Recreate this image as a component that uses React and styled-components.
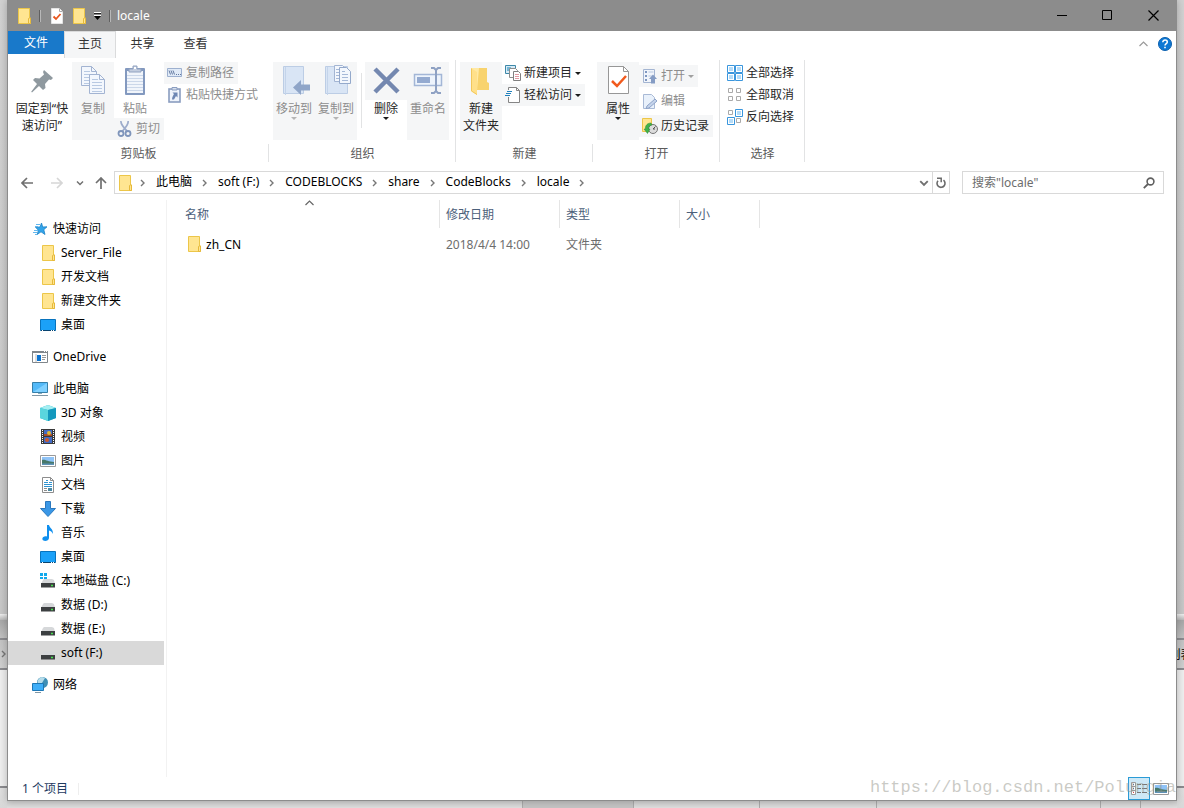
import styled, { createGlobalStyle } from "styled-components";

function Svg({ w = 16, h = 16, box, children }) {
  return (
    <svg width={w} height={h} viewBox={box || `0 0 ${w} ${h}`} fill="none" aria-hidden="true">
      {children}
    </svg>
  );
}

/* ---------- small icons ---------- */

const FolderIcon = ({ w = 13, h = 16 }) => (
  <Svg w={w} h={h} box="0 0 13 16">
    <path d="M.5.5h11v9.500h1v5.500H.5z" fill="#ffe591" stroke="#ecc649" />
    <path d="M10.500 15.500v-5l1-.5h1v5.500z" fill="#ffe591" stroke="#e6b93a" />
  </Svg>
);

const SheetCheckIcon = () => (
  <Svg w={14} h={16}>
    <path d="M.5.5h8l3 3v12H.5z" fill="#fff" stroke="#e4e4e4" />
    <path d="M8.500.5v3h3" stroke="#aaa" />
    <path d="M2.500 8.500 5 11l4.500-5" stroke="#e8561e" strokeWidth="1.800" />
  </Svg>
);

const QuickMenuIcon = () => (
  <Svg w={7} h={8}>
    <path d="M0 .5h7" stroke="#fff" />
    <path d="M0 1.500h7" stroke="#222" />
    <path d="M0 4h7L3.500 8z" fill="#000" />
    <path d="M0 3.500h7" stroke="#fff" />
  </Svg>
);

const Caret = ({ color = "#1a1a1a" }) => (
  <Svg w={6} h={3}>
    <path d="M0 0h6L3 3z" fill={color} />
  </Svg>
);

const Crumb = () => (
  <Svg w={6} h={8}>
    <path d="m1 1 3 3-3 3" stroke="#777" strokeWidth="1.400" />
  </Svg>
);

const ArrowLeft = ({ color = "#707070" }) => (
  <Svg w={12} h={12}>
    <path d="M12 6H1M6 1 1 6l5 5" stroke={color} strokeWidth="1.700" />
  </Svg>
);

const ArrowRight = () => (
  <Svg w={12} h={12}>
    <path d="M0 6h11M6 1l5 5-5 5" stroke="#d6d6d6" strokeWidth="1.700" />
  </Svg>
);

const ArrowUp = () => (
  <Svg w={12} h={12}>
    <path d="M6 12V1M1 6l5-5 5 5" stroke="#707070" strokeWidth="1.700" />
  </Svg>
);

const ChevronDown = ({ w = 8 }) => (
  <Svg w={w} h={w} box="0 0 8 8">
    <path d="m1 2.500 3 3 3-3" stroke="#707070" strokeWidth="1.500" />
  </Svg>
);

const ChevronUp = ({ color = "#9a9a9a" }) => (
  <Svg w={9} h={6}>
    <path d="m.5 5 4-4 4 4" stroke={color} strokeWidth="1.200" />
  </Svg>
);

const RefreshIcon = () => (
  <Svg w={10} h={12}>
    <path d="M7.500 3.200A4 4 0 1 1 2 3.700" stroke="#6a6a6a" strokeWidth="1.600" />
    <path d="M1 1.200h4.200v4" stroke="#6a6a6a" strokeWidth="1.500" />
  </Svg>
);

const SearchIcon = () => (
  <Svg w={12} h={12}>
    <circle cx="7.500" cy="4.500" r="3.400" stroke="#606060" strokeWidth="1.600" />
    <path d="M5 7 .8 11.200" stroke="#606060" strokeWidth="1.800" />
  </Svg>
);

const HelpIcon = () => (
  <Svg w={14} h={14}>
    <circle cx="7" cy="7" r="6.500" fill="#0f78d4" stroke="#0a5fae" />
    <path d="M4.800 5.200c0-3 4.500-2.700 4.500-.2C9.300 6.700 7 6.600 7 8.600" stroke="#fff" strokeWidth="1.500" />
    <path d="M6.200 9.700h1.600v1.600H6.200z" fill="#fff" />
  </Svg>
);

/* ---------- ribbon icons ---------- */

const PinIcon = () => (
  <Svg w={32} h={32}>
    <path d="m18 5 9 8-2 2-2-.5-4 4.500.5 4-2.500 2-4-4-7 6.500-.8-.8L11 19l-4-4 2-2 4.500.5 4.500-4-1-2.500z" fill="#8f999f" />
  </Svg>
);

const Page = ({ x, y, fill = "#f3f7fd", stroke = "#a3b4d2" }) => (
  <g>
    <path d={`M${x}.5 ${y}.5h10l5 5v14h-15z`} fill={fill} stroke={stroke} />
    <path d={`M${x + 10}.5 ${y}.5v5h5`} stroke={stroke} />
    <path
      d={`M${x + 3} ${y + 5}.5h6M${x + 3} ${y + 8}.5h10M${x + 3} ${y + 11}.5h10M${x + 3} ${y + 14}.5h10M${x + 3} ${y + 17}.5h10`}
      stroke="#b8c9e2"
    />
  </g>
);

const CopyIcon = () => (
  <Svg w={32} h={32}>
    <Page x={4} y={1} />
    <Page x={12} y={9} />
  </Svg>
);

const PasteIcon = () => (
  <Svg w={32} h={32}>
    <rect x="6" y="3" width="20" height="27" rx="1" fill="#8399bf" />
    <path d="M8 6h16v22H8z" fill="#f1f5fb" />
    <path d="M8 10.500h16M8 13.500h16M8 16.500h16M8 19.500h16M8 22.500h16M8 25.500h16" stroke="#cbd7e9" />
    <path d="M10 7V4h4V1h4v3h4v3z" fill="#c3cddf" stroke="#91a2c0" />
    <path d="M15 2h2v2h-2z" fill="#fff" />
  </Svg>
);

const CopyPathIcon = () => (
  <Svg>
    <path d="M.5 3.500h14v8H.5z" fill="#e0eaf7" stroke="#9db0cf" />
    <path d="m2 5.500 1.500 4M4 5.500l1.500 4M6 5.500l1.500 4" stroke="#6379a0" />
    <path d="M9 9.500h1M11 9.500h1M13 9.500h1" stroke="#6379a0" />
  </Svg>
);

const PasteLinkIcon = () => (
  <Svg>
    <rect x="2" y="2" width="11" height="13" fill="#eef3fb" stroke="#8a9dc0" strokeWidth="1.600" />
    <path d="M5 3V.5h5V3z" fill="#d5deec" stroke="#8a9dc0" />
    <path d="M5.500 5.500h5v5L9 9l-2 3.500H5C5.200 10 6 8.500 7 7z" fill="#6d86b3" />
  </Svg>
);

const CutIcon = () => (
  <Svg>
    <path d="M4 0c-.5 3 3 7 6 10M11 0C12 3 9 6 5.500 10" stroke="#9daccb" strokeWidth="1.800" />
    <circle cx="4" cy="12.500" r="2.500" stroke="#7f95bb" strokeWidth="1.800" />
    <circle cx="11" cy="12.500" r="2.500" stroke="#7f95bb" strokeWidth="1.800" />
  </Svg>
);

const MoveToIcon = () => (
  <Svg w={32} h={32}>
    <path d="M5.500 1.500h20v27h-20z" fill="#d9e5f5" stroke="#bccde5" />
    <path d="M7.500 2v28" stroke="#c4d4ea" />
    <path d="M15 22.500 23 15v4.500h9v6h-9V30z" fill="#8fa5c8" />
  </Svg>
);

const CopyToIcon = () => (
  <Svg w={32} h={32}>
    <path d="M5.500 1.500h22v27h-22z" fill="#d9e5f5" stroke="#bccde5" />
    <path d="M7.500 2v28" stroke="#c4d4ea" />
    <path d="M14.500 .5h8l4 4v12h-12z" fill="#f3f7fd" stroke="#a3b5d3" />
    <path d="M19.500 2.500h7l4 4v12h-11z" fill="#f3f7fd" stroke="#94a9cb" />
    <path d="M16 4.500h3M16 7.500h3M16 10.500h3M16 13.500h3M22 6.500h3M22 9.500h6M22 12.500h6M22 15.500h6" stroke="#a6b9d8" />
  </Svg>
);

const DeleteIcon = () => (
  <Svg w={32} h={32}>
    <path d="M5 4 28 27M28 4 5 27" stroke="#7488b0" strokeWidth="4.500" />
  </Svg>
);

const RenameIcon = () => (
  <Svg w={32} h={32}>
    <path d="M2.500 9.500h27v11h-27z" fill="#eef4fc" stroke="#a3b6d6" strokeWidth="1.500" />
    <path d="M5 12h13v6H5z" fill="#94aad0" />
    <path d="M19 3h3l2 2 2-2h3M19 28h3l2-2 2 2h3M24 4v23" stroke="#8ea1c3" strokeWidth="2" />
  </Svg>
);

const NewFolderIcon = () => (
  <Svg w={32} h={32}>
    <path d="M6 3h12v20H6z" fill="#ffe9a4" />
    <path d="M14 3h8v14l2 1v7H12z" fill="#f8d36e" />
    <path d="m6 3 6 4v23l-6-4z" fill="#ffe08a" />
    <path d="M6.500 3.500V26l5.500 3.500" stroke="#f2c75c" />
  </Svg>
);

const NewItemIcon = () => (
  <Svg>
    <path d="M.5.500h10v8H.5z" fill="#d8ebf6" stroke="#3d88a8" />
    <path d="M2 2h4v4H2z" fill="#75b7d6" />
    <path d="M4.500 3.500h6l2 2v7h-8z" fill="#fff" stroke="#8d8d8d" />
    <path d="M8.500 6.500h5l2 2v7h-7z" fill="#fff" stroke="#808080" />
    <path d="M10 9.500h4M10 11.500h4M10 13.500h4" stroke="#e29aa4" />
  </Svg>
);

const EasyAccessIcon = () => (
  <Svg>
    <path d="M4.500.5h7l3 3v12h-10" fill="#fff" />
    <path d="M3.500 3V.5h8l3 3v12h-11V10M11.500.5v3h3" stroke="#858585" />
    <path d="M2 4.500h5M1 6.500h5M0 8.500h5" stroke="#2181bd" />
  </Svg>
);

const PropertiesIcon = () => (
  <Svg w={32} h={32}>
    <path d="M6.500 1.500h15l5 5v22h-20z" fill="#fff" stroke="#979797" />
    <path d="M21.500 1.500v5h5" stroke="#979797" />
    <path d="m10 16 5 5 9-10" stroke="#f15a1d" strokeWidth="2.500" />
  </Svg>
);

const OpenIcon = () => (
  <Svg>
    <path d="M1.500 1.500h11v13h-11z" fill="#f1f5fb" stroke="#a4b5d2" />
    <path d="M3 4h2M3 8h2M3 12h2" stroke="#7f97c0" strokeWidth="2" />
    <path d="M6.500 4h5M6.500 8h4" stroke="#b7c6df" />
    <path d="M9 15.500V11H7l4-4.500 4 4.500h-2v4.500z" fill="#859cc4" />
  </Svg>
);

const EditIcon = () => (
  <Svg>
    <path d="M1.500 1.500h8l3 3v11h-11z" fill="#e9f1fb" stroke="#a9bad6" />
    <path d="m5 13 8-7 2 2-8 7-3 .5z" fill="#c5d4eb" stroke="#8ea3c8" />
  </Svg>
);

const HistoryIcon = () => (
  <Svg>
    <path d="M.5.5h9v13h-9z" fill="#ffe591" stroke="#ecc649" />
    <circle cx="11" cy="11" r="4.500" fill="#dcdcdc" stroke="#777" />
    <path d="M11 11 13.500 8.500M11 11h2" stroke="#555" />
    <path d="M9 5c-4 0-6 3-5.500 6L2 11l3.500 4.500L8 11H6.500c0-2 1-3.500 3.500-4z" fill="#3fb24a" stroke="#2b8b37" strokeWidth=".5" />
  </Svg>
);

const squares = [[0, 0], [8, 0], [0, 8], [8, 8]];

const SelectIcon = ({ on }) => (
  <Svg>
    {squares.map(([x, y], i) =>
      on[i] ? (
        <g key={i}>
          <path d={`M${x}.5 ${y}.5h7v7h-7z`} fill="#fff" stroke="#3a96dd" />
          <path d={`M${x + 2} ${y + 2}h4v4h-4z`} fill="#b5dcf8" />
        </g>
      ) : (
        <path key={i} d={`M${x + 1}.5 ${y + 1}.5h4v4h-4z`} fill="#fff" stroke="#aaa" />
      )
    )}
  </Svg>
);

/* ---------- tree icons ---------- */

const StarIcon = () => (
  <Svg>
    <path d="m9.500 2 1.200 4 4.300-.2-3.200 2.900 1.200 4.800-4-2.700-3.800 2.700 1.200-4.300L3.500 6.200 8 6z" fill="#32a4ea" stroke="#1d83c7" strokeWidth=".8" />
    <path d="M4 3.500h4M3 5.500h3M2 9.500h4M1 11.500h4M3 13.500h2" stroke="#62b7ee" />
  </Svg>
);

const DesktopIcon = () => (
  <Svg>
    <path d="M.5 2.500h15v11H.5z" fill="#1ba1f8" stroke="#0873bd" />
    <path d="M1 13.500h14" stroke="#08436f" />
    <path d="M2 13.500h1M11 13.500h1M13 13.500h1" stroke="#fff" />
  </Svg>
);

const OneDriveIcon = () => (
  <Svg>
    <path d="M.5 2.500h15v11H.5z" fill="#fff" stroke="#80868b" />
    <path d="M0 3h16" stroke="#80868b" strokeWidth="2" />
    <path d="M12 2.500h1M14 2.500h1" stroke="#fff" />
    <path d="M3 5h2v8H3z" fill="#ddd" />
    <path d="M5 6h4v6H5z" fill="#0b73d0" />
    <path d="M10 6.500h4M10 8.500h4M10 10.500h3" stroke="#999" />
  </Svg>
);

const ComputerIcon = () => (
  <Svg>
    <path d="M.5 1.500h15v10H.5z" fill="#53b9f8" stroke="#357fa9" />
    <path d="M1 11 15 2v9z" fill="#7fd0ff" />
    <path d="M6 12.500h4" stroke="#8ab" />
    <path d="M0 14.500h16" stroke="#8097a5" />
  </Svg>
);

const CubeIcon = () => (
  <Svg>
    <path d="m0 3 8-3 8 3v10l-8 3-8-3z" fill="#27b6c9" />
    <path d="m0 3 8-3 8 3-8 2z" fill="#a4eef2" />
    <path d="m0 3 8 2v11l-8-3z" fill="#5ad5de" />
    <path d="m8 5 8-2v10l-8 3z" fill="#1398bd" />
  </Svg>
);

const VideoIcon = () => (
  <Svg>
    <path d="M1 0h14v15H1z" fill="#3a3a3a" />
    <path d="M4 1h8v6H4zM4 8h8v6H4z" fill="#426bc5" />
    <path d="M4 5h8v2H4z" fill="#a74b2a" />
    <circle cx="9" cy="4" r="2" fill="#e0b631" />
    <circle cx="7" cy="11" r="2" fill="#cb5b2e" />
    <path d="M2.500 1v14M13.500 1v14" stroke="#fff" strokeDasharray="1 1" />
  </Svg>
);

const PictureIcon = () => (
  <Svg>
    <path d="M.5 2.500h15v11H.5z" fill="#fff" stroke="#999" />
    <path d="M2 4h12v8H2z" fill="#8fc3f7" />
    <path d="M2 7c3-1 6 2 12 2v3H2z" fill="#47786a" />
    <path d="M2 10.500h12V12H2z" fill="#5f93b8" />
  </Svg>
);

const DocumentIcon = () => (
  <Svg>
    <path d="M2.500.5h8l3 3v12h-11z" fill="#fff" stroke="#8d8d8d" />
    <path d="M10.500.5v3h3" stroke="#8d8d8d" />
    <path d="M6 3.500h2M4 5.500h4M9 5.500h3M4 7.500h8M4 9.500h8" stroke="#2d93d2" />
    <path d="M4 11.500h3M4 13.500h3" stroke="#8d8d8d" />
    <path d="M8 11h4v3H8z" fill="#4c8aa5" />
  </Svg>
);

const DownloadIcon = () => (
  <Svg>
    <path d="M5.500.500h5v7h5L8 15.500.5 7.500h5z" fill="#3a97e6" stroke="#2a78be" />
  </Svg>
);

const MusicIcon = () => (
  <Svg>
    <path d="M7 0h2c.5 3 4.500 4 3.800 9-.6-2-1.800-3-3.800-3.500V13c0 3-5.500 4-6.500 1.500-.8-2 2-4 4.500-3z" fill="#0f8fee" />
  </Svg>
);

const DriveIcon = ({ system }) => (
  <Svg>
    <path d="m3 7 1-1h8l2 1 1 4H1z" fill="#d6d8da" />
    <path d="M1 10h14v4.500H1z" fill="#3c3f41" />
    <path d="M11 12.500h2" stroke="#45e04d" strokeWidth="1.500" />
    {system && <path d="M0 0h3v3H0zM4 0h3v3H4zM0 4h3v2H0zM4 4h3v2H4z" fill="#11a9ec" />}
  </Svg>
);

const NetworkIcon = () => (
  <Svg>
    <circle cx="10.500" cy="5.500" r="5.500" fill="#3f8fb5" />
    <path d="M10 0c-4 1-6 5-3 8l3-2 3-5z" fill="#b6dcea" />
    <path d="M.5 6.500h11v7H.5z" fill="#3eaef8" stroke="#1d77b5" />
    <path d="M3 15.500h6" stroke="#8097a5" />
  </Svg>
);

const DetailsIcon = () => (
  <Svg>
    <path d="M.5 1.500h4v12h-4zM.5 5.500h4M.5 9.500h4" fill="#fff" stroke="#9b9b9b" />
    <path d="M2 3.500h1M2 7.500h1" stroke="#2d6a94" />
    <path d="M2 11.500h1" stroke="#d44" />
    <path d="M6 3.500h4M11 3.500h5M6 7.500h4M11 7.500h5M6 11.500h4M11 11.500h5" stroke="#777" />
  </Svg>
);

/* ---------- data ---------- */

const tree = [
  {
    name: "快速访问",
    icon: <StarIcon />,
    items: [
      { name: "Server_File", icon: <FolderIcon /> },
      { name: "开发文档", icon: <FolderIcon /> },
      { name: "新建文件夹", icon: <FolderIcon /> },
      { name: "桌面", icon: <DesktopIcon /> },
    ],
  },
  { name: "OneDrive", icon: <OneDriveIcon />, items: [] },
  {
    name: "此电脑",
    icon: <ComputerIcon />,
    items: [
      { name: "3D 对象", icon: <CubeIcon /> },
      { name: "视频", icon: <VideoIcon /> },
      { name: "图片", icon: <PictureIcon /> },
      { name: "文档", icon: <DocumentIcon /> },
      { name: "下载", icon: <DownloadIcon /> },
      { name: "音乐", icon: <MusicIcon /> },
      { name: "桌面", icon: <DesktopIcon /> },
      { name: "本地磁盘 (C:)", icon: <DriveIcon system /> },
      { name: "数据 (D:)", icon: <DriveIcon /> },
      { name: "数据 (E:)", icon: <DriveIcon /> },
      { name: "soft (F:)", icon: <DriveIcon />, selected: true },
    ],
  },
  { name: "网络", icon: <NetworkIcon />, items: [] },
];

const path = ["此电脑", "soft (F:)", "CODEBLOCKS", "share", "CodeBlocks", "locale"];

const files = [{ name: "zh_CN", date: "2018/4/4 14:00", type: "文件夹", size: "" }];

function Large({ icon, label, caret, ...rest }) {
  return (
    <LargeButton {...rest}>
      <IconCell $shade={rest.$shadeIcon}>{icon}</IconCell>
      <LargeLabel>{label}</LargeLabel>
      {caret && <Caret color={rest.$muted ? "#b5b5b5" : undefined} />}
    </LargeButton>
  );
}

function Small({ icon, label, caret, ...rest }) {
  return (
    <SmallButton {...rest}>
      {icon}
      <Label>{label}</Label>
      {caret && <Caret color={rest.$muted ? "#a0a0a0" : undefined} />}
    </SmallButton>
  );
}

function Ribbon() {
  return (
    <RibbonBar>
      <Group $width={261}>
        <Tools>
          <Large icon={<PinIcon />} label="固定到“快速访问”" $wide />
          <Large icon={<CopyIcon />} label="复制" $shade $muted />
          <Stack>
            <Large icon={<PasteIcon />} label="粘贴" $muted $short />
            <Small icon={<CutIcon />} label="剪切" $shade $muted />
          </Stack>
          <Stack>
            <Small icon={<CopyPathIcon />} label="复制路径" $shade $muted />
            <Small icon={<PasteLinkIcon />} label="粘贴快捷方式" $muted />
          </Stack>
        </Tools>
        <Caption>剪贴板</Caption>
        <Divider $short />
      </Group>
      <Group $width={187}>
        <Tools>
          <Large icon={<MoveToIcon />} label="移动到" caret $shade $muted />
          <Large icon={<CopyToIcon />} label="复制到" caret $shade $muted />
          <InnerLine />
          <Large icon={<DeleteIcon />} label="删除" caret $shadeIcon />
          <Large icon={<RenameIcon />} label="重命名" $shade $muted />
        </Tools>
        <Caption>组织</Caption>
        <Divider />
      </Group>
      <Group $width={137}>
        <Tools>
          <Large icon={<NewFolderIcon />} label={"新建\n文件夹"} $shade />
          <Stack>
            <Small icon={<NewItemIcon />} label="新建项目" caret />
            <Small icon={<EasyAccessIcon />} label="轻松访问" caret $shade />
          </Stack>
        </Tools>
        <Caption>新建</Caption>
        <Divider $short />
      </Group>
      <Group $width={127}>
        <Tools>
          <Large icon={<PropertiesIcon />} label="属性" caret $shade />
          <Stack $spread>
            <Small icon={<OpenIcon />} label="打开" caret $shade $muted />
            <Small icon={<EditIcon />} label="编辑" $muted />
            <Small icon={<HistoryIcon />} label="历史记录" $shade />
          </Stack>
        </Tools>
        <Caption>打开</Caption>
        <Divider />
      </Group>
      <Group $width={85}>
        <Tools>
          <Stack>
            <Small icon={<SelectIcon on={[1, 1, 1, 1]} />} label="全部选择" />
            <Small icon={<SelectIcon on={[0, 0, 0, 0]} />} label="全部取消" />
            <Small icon={<SelectIcon on={[0, 1, 1, 0]} />} label="反向选择" />
          </Stack>
        </Tools>
        <Caption>选择</Caption>
        <Divider />
      </Group>
    </RibbonBar>
  );
}

function Rail({ children }) {
  return (
    <RailColumn>
      <Band $flex={616} $from="#d2d2d2" $to="#c8c8c8" />
      <Band $h={6} $from="#f0f0f0" $to="#b8b8b8" />
      <Band $h={20} $from="#a8a8a8" $to="#c2c2c2" $line />
      <Band $h={30} $from="#c4c4c4" $to="#d0d0d0" $line>
        {children}
      </Band>
      <Band $flex={116} $from="#efefef" $to="#efefef" $line />
      <Band $h={20} $from="#e0e0e0" $to="#d8d8d8" />
    </RailColumn>
  );
}

function App() {
  return (
    <Desktop>
      <GlobalStyle />
      <Rail>
        <Crumb />
      </Rail>
      <Column>
        <Window>
          <TitleBar>
            <FolderIcon />
            <TitleMark />
            <SheetCheckIcon />
            <FolderIcon />
            <QuickMenuIcon />
            <TitleMark />
            <Title>locale</Title>
            <WindowButton aria-label="最小化">
              <Svg w={11} h={11}>
                <path d="M1 5.500h10" stroke="#000" />
              </Svg>
            </WindowButton>
            <WindowButton aria-label="最大化">
              <Svg w={11} h={11}>
                <path d="M.5.5h9v9h-9z" stroke="#000" />
              </Svg>
            </WindowButton>
            <WindowButton aria-label="关闭">
              <Svg w={11} h={11}>
                <path d="m.5.5 10 10M10.500.5l-10 10" stroke="#000" strokeWidth="1.200" />
              </Svg>
            </WindowButton>
          </TitleBar>

          <Tabs>
            <FileTab>文件</FileTab>
            <Tab $active>主页</Tab>
            <Tab>共享</Tab>
            <Tab>查看</Tab>
            <TabTools>
              <PlainButton aria-label="折叠功能区">
                <ChevronUp />
              </PlainButton>
              <PlainButton aria-label="帮助">
                <HelpIcon />
              </PlainButton>
            </TabTools>
          </Tabs>

          <Ribbon />

          <NavBar>
            <NavButtons>
              <PlainButton aria-label="后退"><ArrowLeft /></PlainButton>
              <PlainButton aria-label="前进"><ArrowRight /></PlainButton>
              <PlainButton aria-label="最近浏览的位置"><ChevronDown /></PlainButton>
              <PlainButton aria-label="上移"><ArrowUp /></PlainButton>
            </NavButtons>
            <Address>
              <FolderIcon />
              <Crumbs>
                <Crumb />
                {path.map((name) => (
                  <CrumbItem key={name}>
                    <a href="#">{name}</a>
                    <Crumb />
                  </CrumbItem>
                ))}
              </Crumbs>
              <PlainButton aria-label="以前的位置"><ChevronDown w={10} /></PlainButton>
              <RefreshButton aria-label="刷新"><RefreshIcon /></RefreshButton>
            </Address>
            <SearchBox>
              <input type="text" aria-label="搜索" placeholder={'搜索"locale"'} />
              <SearchIcon />
            </SearchBox>
          </NavBar>

          <Body>
            <Tree>
              {tree.map((root) => (
                <Branch key={root.name}>
                  <TreeItem href="#" $root>
                    <TreeIcon>{root.icon}</TreeIcon>
                    <Label>{root.name}</Label>
                  </TreeItem>
                  {root.items.map((item) => (
                    <TreeItem href="#" key={item.name} $selected={item.selected}>
                      <TreeIcon>{item.icon}</TreeIcon>
                      <Label>{item.name}</Label>
                    </TreeItem>
                  ))}
                </Branch>
              ))}
            </Tree>
            <Content>
              <FileTable>
                <colgroup>
                  <col width="261" />
                  <col width="120" />
                  <col width="120" />
                  <col width="80" />
                </colgroup>
                <thead>
                  <tr>
                    <th>
                      名称
                      <SortMark><ChevronUp color="#666" /></SortMark>
                    </th>
                    <th>修改日期</th>
                    <th>类型</th>
                    <th>大小</th>
                  </tr>
                </thead>
                <tbody>
                  {files.map((file) => (
                    <tr key={file.name}>
                      <td>
                        <FileName>
                          <FolderIcon />
                          {file.name}
                        </FileName>
                      </td>
                      <td>{file.date}</td>
                      <td>{file.type}</td>
                      <td>{file.size}</td>
                    </tr>
                  ))}
                </tbody>
              </FileTable>
            </Content>
          </Body>

          <StatusBar>
            <Count>1 个项目</Count>
            <ViewButton aria-label="详细信息" $active><DetailsIcon /></ViewButton>
            <ViewButton aria-label="大缩略图"><PictureIcon /></ViewButton>
            <Watermark>https://blog.csdn.net/Polungia</Watermark>
          </StatusBar>
        </Window>
        <Taskline>
          <i />
          <i />
          <i />
          <i />
          <i />
          <i />
        </Taskline>
      </Column>
      <Rail>
        <span>列表</span>
      </Rail>
    </Desktop>
  );
}

const GlobalStyle = createGlobalStyle`
  * {
    box-sizing: border-box;
  }
  body {
    margin: 0;
    font-family: "Noto Sans", "Noto Sans CJK SC", sans-serif;
    font-size: 12px;
    line-height: 17px;
    color: #000;
  }
  button, input {
    font: inherit;
    color: inherit;
    border: 0;
    padding: 0;
    background: none;
  }
  a {
    color: inherit;
    text-decoration: none;
  }
  svg {
    display: block;
    flex: none;
  }
`

const Desktop = styled.div`
  display: grid;
  grid-template-columns: 7px minmax(0, 1fr) 7px;
  min-height: 100vh;
  background: #d4d4d4;
`

const RailColumn = styled.div`
  display: flex;
  flex-direction: column;
`

const Band = styled.div`
  display: flex;
  align-items: center;
  justify-content: center;
  overflow: hidden;
  white-space: nowrap;
  flex: ${props => props.$flex ? `${props.$flex} 0 0` : `0 0 ${props.$h}px`};
  background: linear-gradient(${props => props.$from}, ${props => props.$to});
  border-bottom: ${props => props.$line ? "2px solid #8c8c90" : "0"};
`

const Column = styled.div`
  display: flex;
  flex-direction: column;
`

const Window = styled.div`
  position: relative;
  z-index: 1;
  flex: 1;
  display: flex;
  flex-direction: column;
  background: #fff;
  border: 1px solid #8c8c8c;
  border-top: 0;
  box-shadow: 0 0 8px rgba(0, 0, 0, 0.25);
`

const Taskline = styled.div`
  height: 7px;
  display: grid;
  grid-template-columns: 516px 111px 126px 117px 224px 40px;
  background: linear-gradient(#d0d0d0, #dedede);
  i {
    border-right: 1px solid #aaa;
  }
  i:nth-child(2) {
    background: #c4c4c4;
  }
`

const TitleBar = styled.header`
  display: flex;
  align-items: center;
  height: 31px;
  padding-left: 10px;
  background: #8c8c8c;
  color: #fff;
  svg {
    margin-right: 8px;
  }
`

const TitleMark = styled.span`
  width: 2px;
  height: 12px;
  margin-right: 10px;
  border-left: 1px solid #606060;
  border-right: 1px solid #b8b8b8;
`

const Title = styled.span`
  flex: 1;
  margin-left: -4px;
`

const WindowButton = styled.button`
  width: 46px;
  height: 31px;
  display: flex;
  align-items: center;
  justify-content: center;
  svg {
    margin: 0;
  }
`

const Tabs = styled.nav`
  display: flex;
  align-items: flex-start;
  height: 27px;
  padding-right: 4px;
`

const Tab = styled.button`
  width: ${props => props.$active ? "52px" : "53px"};
  height: 27px;
  padding-bottom: 4px;
  color: #333;
  background: ${props => props.$active ? "#f5f6f7" : "none"};
  border: solid ${props => props.$active ? "#dadbdc" : "transparent"};
  border-width: 1px 1px 0;
`

const FileTab = styled.button`
  width: 56px;
  height: 23px;
  background: #1979ca;
  color: #fff;
`

const TabTools = styled.div`
  margin-left: auto;
  height: 26px;
  display: flex;
  align-items: center;
  gap: 10px;
`

const PlainButton = styled.button`
  display: flex;
  align-items: center;
  justify-content: center;
`

const RibbonBar = styled.section`
  display: flex;
  height: 107px;
`

const Group = styled.div`
  position: relative;
  width: ${props => props.$width}px;
  padding: 4px 4px 0;
  display: flex;
  flex-direction: column;
`

const Tools = styled.div`
  display: flex;
  height: 78px;
`

const Stack = styled.div`
  display: flex;
  flex-direction: column;
  align-items: flex-start;
  justify-content: ${props => props.$spread ? "space-evenly" : "flex-start"};
`

const Caption = styled.div`
  margin-top: 5px;
  text-align: center;
  color: #5a5a5a;
`

const Divider = styled.span`
  position: absolute;
  right: 0;
  bottom: 3px;
  top: ${props => props.$short ? "86px" : "2px"};
  border-right: 1px solid #e2e3e4;
`

const InnerLine = styled.span`
  margin: 11px 3px 12px 4px;
  border-left: 1px solid #e2e3e4;
`

const LargeButton = styled.button`
  display: flex;
  flex-direction: column;
  align-items: center;
  flex: none;
  width: ${props => props.$wide ? "60px" : "42px"};
  height: ${props => props.$short ? "56px" : "78px"};
  background: ${props => props.$shade ? "#f5f6f7" : "none"};
  color: ${props => props.$muted ? "#8d8d8d" : "#262626"};
`

const IconCell = styled.span`
  width: 42px;
  height: 38px;
  padding: 3px 5px;
  background: ${props => props.$shade ? "#f5f6f7" : "none"};
`

const LargeLabel = styled.span`
  width: 56px;
  margin: 0 -7px;
  padding: 0 1px;
  text-align: center;
  white-space: pre-line;
`

const Label = styled.span`
  padding-bottom: 2px;
`

const SmallButton = styled.button`
  display: flex;
  align-items: center;
  gap: 3px;
  height: 22px;
  padding: 0 4px 0 3px;
  white-space: nowrap;
  background: ${props => props.$shade ? "#f5f6f7" : "none"};
  color: ${props => props.$muted ? "#8d8d8d" : "#262626"};
`

const NavBar = styled.div`
  display: flex;
  align-items: center;
  height: 35px;
  padding: 0 12px 0 13px;
`

const NavButtons = styled.div`
  display: grid;
  grid-template-columns: 30px 25px 19px 19px;
  justify-items: start;
  align-items: center;
  width: 93px;
`

const Address = styled.div`
  flex: 1;
  display: flex;
  align-items: center;
  height: 23px;
  padding-left: 4px;
  border: 1px solid #d9d9d9;
`

const Crumbs = styled.div`
  flex: 1;
  display: flex;
  align-items: center;
  gap: 10px;
  margin-left: 8px;
  a {
    padding-bottom: 2px;
  }
`

const CrumbItem = styled.span`
  display: flex;
  align-items: center;
  gap: 10px;
`

const RefreshButton = styled(PlainButton)`
  width: 17px;
  height: 21px;
  margin-left: 3px;
  border-left: 1px solid #d9d9d9;
`

const SearchBox = styled.label`
  display: flex;
  align-items: center;
  width: 202px;
  height: 23px;
  margin-left: 12px;
  padding: 0 8px 0 9px;
  border: 1px solid #d9d9d9;
  input {
    flex: 1;
    min-width: 0;
    outline: 0;
  }
  input::placeholder {
    color: #6d6d6d;
    opacity: 1;
  }
`

const Body = styled.div`
  flex: 1;
  display: flex;
`

const Tree = styled.nav`
  width: 159px;
  padding: 17px 2px 0 0;
  border-right: 1px solid #f2f2f2;
`

const Branch = styled.div`
  margin-bottom: 8px;
`

const TreeItem = styled.a`
  display: flex;
  align-items: center;
  gap: 5px;
  height: 24px;
  padding-left: ${props => props.$root ? "24px" : "32px"};
  background: ${props => props.$selected ? "#d9d9d9" : "none"};
`

const TreeIcon = styled.span`
  width: 16px;
  display: flex;
  justify-content: center;
`

const Content = styled.main`
  flex: 1;
`

const FileTable = styled.table`
  margin-left: 12px;
  border-collapse: separate;
  border-spacing: 0;
  table-layout: fixed;
  width: 581px;
  th, td {
    padding: 0 6px;
    text-align: left;
    font-weight: 400;
    color: #6d6d6d;
  }
  th {
    position: relative;
    height: 28px;
    color: #4c607a;
    border-right: 1px solid #e5e5e5;
  }
  td {
    height: 32px;
  }
`

const SortMark = styled.span`
  position: absolute;
  top: 0;
  left: 50%;
  margin-left: -4px;
`

const FileName = styled.span`
  display: flex;
  align-items: center;
  gap: 5px;
  padding-left: 3px;
  color: #000;
`

const StatusBar = styled.footer`
  position: relative;
  display: flex;
  align-items: center;
  height: 23px;
  padding-right: 4px;
  color: #1e3a5f;
`

const Count = styled.span`
  margin: 0 auto 0 14px;
  padding-right: 10px;
  border-right: 1px solid #eee;
  line-height: 12px;
`

const ViewButton = styled.button`
  display: flex;
  align-items: center;
  justify-content: center;
  width: 22px;
  height: 23px;
  background: ${props => props.$active ? "#cde8f6" : "none"};
  border: 1px solid ${props => props.$active ? "#2a9bd6" : "transparent"};
`

const Watermark = styled.span`
  position: absolute;
  right: 0;
  bottom: 2px;
  font-family: "Liberation Mono", monospace;
  font-size: 17px;
  line-height: 20px;
  color: rgba(150, 150, 140, 0.5);
  pointer-events: none;
`

export default App
